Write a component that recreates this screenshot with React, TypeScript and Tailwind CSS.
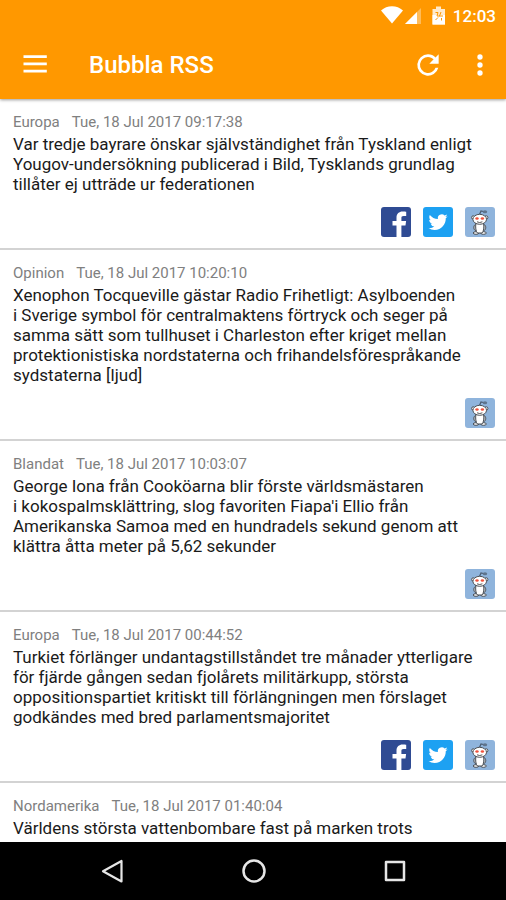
import React from 'react';

interface Article {
  category: string;
  date: string;
  title: string;
  social?: boolean;
}

// \u00a0 keeps the short word "i" together with the word after it
const articles: Article[] = [
  {
    category: 'Europa',
    date: 'Tue, 18 Jul 2017 09:17:38',
    title:
      'Var tredje bayrare önskar självständighet från Tyskland enligt Yougov-undersökning publicerad i Bild, Tysklands grundlag tillåter ej utträde ur federationen',
    social: true,
  },
  {
    category: 'Opinion',
    date: 'Tue, 18 Jul 2017 10:20:10',
    title:
      'Xenophon Tocqueville gästar Radio Frihetligt: Asylboenden i\u00a0Sverige symbol för centralmaktens förtryck och seger på samma sätt som tullhuset i Charleston efter kriget mellan protektionistiska nordstaterna och frihandelsförespråkande sydstaterna [ljud]',
  },
  {
    category: 'Blandat',
    date: 'Tue, 18 Jul 2017 10:03:07',
    title:
      "George Iona från Cooköarna blir förste världsmästaren i\u00a0kokospalmsklättring, slog favoriten Fiapa'i Ellio från Amerikanska Samoa med en hundradels sekund genom att klättra åtta meter på 5,62 sekunder",
  },
  {
    category: 'Europa',
    date: 'Tue, 18 Jul 2017 00:44:52',
    title:
      'Turkiet förlänger undantagstillståndet tre månader ytterligare för fjärde gången sedan fjolårets militärkupp, största oppositionspartiet kritiskt till förlängningen men förslaget godkändes med bred parlamentsmajoritet',
    social: true,
  },
  {
    category: 'Nordamerika',
    date: 'Tue, 18 Jul 2017 01:40:04',
    title: 'Världens största vattenbombare fast på marken trots',
  },
];

const StatusBar: React.FC = () => (
  <div className="flex h-8 items-center justify-end pr-[10px] text-white">
    <svg className="h-6 w-24" viewBox="0 0 96 24" fill="currentColor" aria-hidden="true">
      {/* Wifi */}
      <path d="M24 6.500C30 .8 40 .8 46 6.500L35 19.500Z" />
      {/* Signal */}
      <path d="M64 4v16H48Z" opacity=".35" />
      <path d="M60 8v12H48Z" />
      {/* Battery */}
      <path d="M79 2.500h5V5h4v15.500H75.500V5H79z" opacity=".8" />
      <path d="M75.500 11H88v9.500H75.500z" />
      <path d="M78.500 8.500h2.500l-1 3.500h3M84 8l-1.500 4H86M78.500 16l2.500-2.500M84.500 16.500V14" stroke="#ff9800" strokeWidth="1" fill="none" />
    </svg>
    <span className="text-[17px] leading-6 font-medium">12:03</span>
  </div>
);

const Header: React.FC = () => (
  <header className="relative z-10 shrink-0 bg-[#ff9800] pb-px shadow-[0_1px_3px_rgba(0,0,0,0.4)]">
    <StatusBar />
    <div className="flex h-[66px] items-center px-5 text-white">
      <button type="button" aria-label="Menu" className="flex size-8 items-center justify-center">
        <svg className="size-8" viewBox="0 0 32 32" fill="currentColor">
          <path d="M3.500 6.300h23.300v2.700H3.500zM3.500 13.500h23.300v2.700H3.500zM3.500 20.700h23.300v2.700H3.500z" />
        </svg>
      </button>
      <h1 className="ml-[37px] flex-1 text-2xl font-medium">Bubbla RSS</h1>
      <button type="button" aria-label="Refresh" className="flex size-8 items-center justify-center">
        <svg className="size-8" viewBox="0 0 24 24" fill="currentColor">
          <path d="M17.650 6.350A7.958 7.958 0 0 0 12 4a8 8 0 1 0 7.730 10h-2.080A6 6 0 1 1 12 6c1.660 0 3.140.69 4.220 1.780L13 11h7V4z" />
        </svg>
      </button>
      <button type="button" aria-label="More" className="-mr-[10px] ml-5 flex size-8 items-center justify-center">
        <svg className="size-8" viewBox="0 0 24 24" fill="currentColor">
          <path d="M12 8a2 2 0 1 0 0-4 2 2 0 0 0 0 4zm0 2a2 2 0 1 0 0 4 2 2 0 0 0 0-4zm0 6a2 2 0 1 0 0 4 2 2 0 0 0 0-4z" />
        </svg>
      </button>
    </div>
  </header>
);

const FacebookIcon: React.FC = () => (
  <svg className="size-[30px]" viewBox="0 0 30 30">
    <rect width="30" height="30" rx="3" fill="#2f4b93" />
    <path
      d="M15.500 30V18.500h-4V14h4v-3.200C15.500 6.800 18 4.600 21.600 4.600c1.700 0 3.200.1 3.600.2V9h-2.500c-2 0-2.300.9-2.300 2.300V14h4.700l-.6 4.500h-4.100V30z"
      fill="#fff"
    />
  </svg>
);

const TwitterIcon: React.FC = () => (
  <svg className="size-[30px]" viewBox="0 0 30 30">
    <rect width="30" height="30" rx="3" fill="#1da1f2" />
    <g transform="translate(5.500 5.500) scale(.8)">
      <path
        d="M23.950 4.570a10 10 0 0 1-2.820.77 4.960 4.960 0 0 0 2.160-2.720c-.95.55-2 .95-3.130 1.180a4.920 4.920 0 0 0-8.380 4.480C7.690 8.090 4.070 6.130 1.640 3.160a4.820 4.820 0 0 0-.67 2.480c0 1.710.87 3.210 2.190 4.100a4.900 4.900 0 0 1-2.230-.62v.06a4.920 4.920 0 0 0 3.950 4.830 5 5 0 0 1-2.210.08 4.940 4.940 0 0 0 4.600 3.420A9.870 9.870 0 0 1 0 19.540a14 14 0 0 0 7.550 2.210c9.050 0 14-7.500 14-13.980 0-.21 0-.42-.02-.63a9.940 9.940 0 0 0 2.460-2.550z"
        fill="#fff"
      />
    </g>
  </svg>
);

const RedditIcon: React.FC = () => (
  <svg className="size-[30px]" viewBox="0 0 30 30">
    <rect width="30" height="30" rx="3" fill="#8fb4dc" />
    {/* Antenna */}
    <path d="M14.500 7.500 16 4l4.500 1" stroke="#4b5c70" strokeWidth="1.200" fill="none" />
    <ellipse cx="20" cy="4.800" rx="2.200" ry="1.500" fill="#5f748c" />
    <g fill="#fff" stroke="#4a4f55" strokeWidth="1">
      {/* Arms and feet */}
      <path d="M11 17c-3 1.600-3 5.500 0 7M18.500 17c3 1.600 3 5.500 0 7" fill="#b9bfc6" />
      <ellipse cx="11" cy="26" rx="2.800" ry="1.300" />
      <ellipse cx="18.500" cy="26" rx="2.800" ry="1.300" />
      <path d="M11 16h7.500c.8 4 .2 8.500-1.500 10h-4.500c-1.700-1.500-2.300-6-1.500-10z" />
      {/* Head */}
      <circle cx="8.300" cy="10.500" r="1.700" />
      <circle cx="21.200" cy="10.500" r="1.700" />
      <ellipse cx="14.700" cy="12.300" rx="6.800" ry="5" />
    </g>
    <ellipse cx="12" cy="11.500" rx="1.700" ry="1.300" fill="#f0523c" />
    <ellipse cx="17.400" cy="11.500" rx="1.700" ry="1.300" fill="#f0523c" />
    <path d="M12 14.800q2.700 1.500 5.400 0" stroke="#444" strokeWidth=".9" fill="none" />
  </svg>
);

const ArticleCard: React.FC<{ article: Article }> = ({ article }) => (
  <article className="border-b-2 border-[#d3d3d3] pt-3 pr-[11px] pb-[11px] pl-[13px]">
    <p className="flex gap-3 text-[15px] leading-[22px] text-[#808080]">
      <span>{article.category}</span>
      <time>{article.date}</time>
    </p>
    <h2 className="mt-px text-[17px] leading-5 text-[#1a1a1a]">{article.title}</h2>
    <div className="mt-[13px] flex justify-end gap-3">
      {article.social && (
        <>
          <button type="button" aria-label="Share on Facebook">
            <FacebookIcon />
          </button>
          <button type="button" aria-label="Share on Twitter">
            <TwitterIcon />
          </button>
        </>
      )}
      <button type="button" aria-label="Share on Reddit">
        <RedditIcon />
      </button>
    </div>
  </article>
);

const NavigationBar: React.FC = () => (
  <nav className="flex h-[58px] shrink-0 items-center justify-around bg-black pr-10 pl-[42px] text-[#e6e6e6]">
    <button type="button" aria-label="Back">
      <svg className="size-8" viewBox="0 0 32 32" fill="none" stroke="currentColor" strokeWidth="2.200" strokeLinejoin="round">
        <path d="M24.500 6v20.500L6 16.200z" />
      </svg>
    </button>
    <button type="button" aria-label="Home">
      <svg className="size-8" viewBox="0 0 32 32" fill="none" stroke="currentColor" strokeWidth="2.500">
        <circle cx="16" cy="16" r="10.500" />
      </svg>
    </button>
    <button type="button" aria-label="Recent apps">
      <svg className="size-8" viewBox="0 0 32 32" fill="none" stroke="currentColor" strokeWidth="2.500" strokeLinejoin="round">
        <path d="M7 7h18v18H7z" />
      </svg>
    </button>
  </nav>
);

const App: React.FC = () => {
  return (
    <div className="flex h-screen flex-col bg-white font-['Roboto',sans-serif]">
      <Header />
      <main className="min-h-0 flex-1 overflow-hidden">
        {articles.map((article) => (
          <ArticleCard key={article.date} article={article} />
        ))}
      </main>
      <NavigationBar />
    </div>
  );
};

export default App;
